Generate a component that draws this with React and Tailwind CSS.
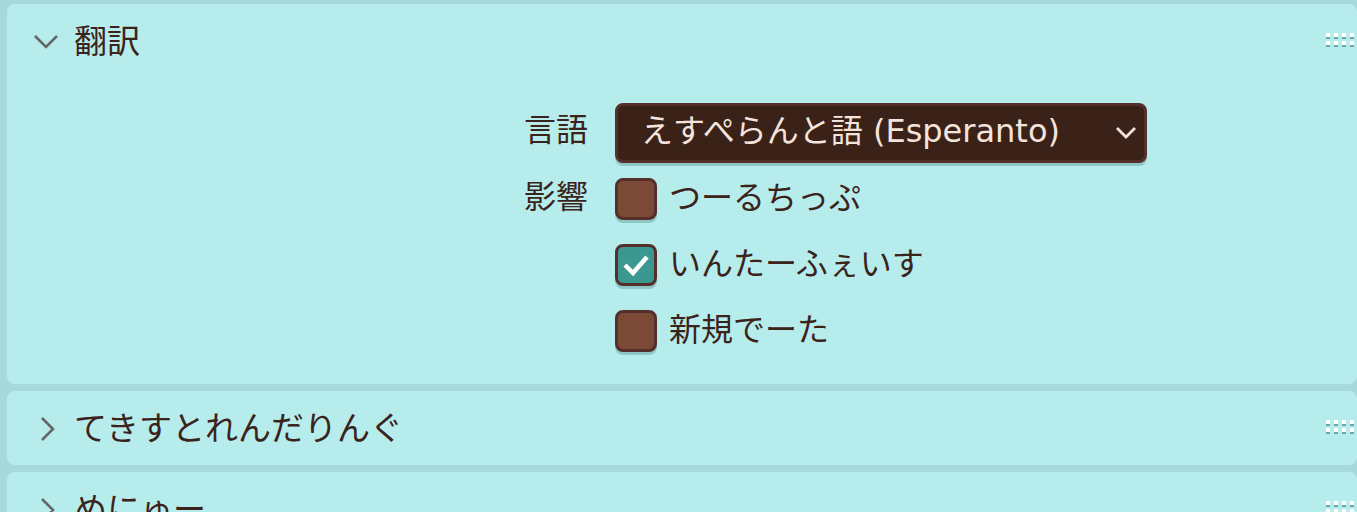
import React, { useState } from 'react';

const FONT = { fontFamily: '"DejaVu Sans", "Noto Sans CJK JP", sans-serif' };

function DragHandle() {
    const dots = [0, 1, 2, 3];
    return (
        <div className="flex flex-col gap-[2px]">
            {[0, 1].map((r) => (
                <div key={r} className="flex gap-[4px]">
                    {dots.map((d) => (
                        <span key={d} className="w-[4px] h-[4px] bg-white border-b-2 border-[#6aa6a6] box-content" />
                    ))}
                </div>
            ))}
        </div>
    );
}

function Chevron({ open }) {
    return open ? (
        <svg width="26" height="16" viewBox="0 0 26 16" fill="none">
            <path d="M2 2 L13 13 L24 2" stroke="#666" strokeWidth="2.6" />
        </svg>
    ) : (
        <svg width="16" height="26" viewBox="0 0 16 26" fill="none">
            <path d="M2 2 L13 13 L2 24" stroke="#666" strokeWidth="2.6" />
        </svg>
    );
}

function PanelHeader({ title, open }) {
    return (
        <div className="h-[76px] flex items-center pr-[3px] pb-[1px]">
            <div className={open ? 'w-[67px] pl-[26px] flex items-center' : 'w-[67px] pl-[33px] flex items-center'}>
                <Chevron open={open} />
            </div>
            <span className="flex-1 text-[33px] leading-[40px] text-[#3a231b]">{title}</span>
            <div className="mt-[-3px]">
                <DragHandle />
            </div>
        </div>
    );
}

function Checkbox({ checked, label, onToggle }) {
    return (
        <div className="flex items-center h-[66px]">
            <button
                onClick={onToggle}
                className={
                    checked
                        ? 'w-[42px] h-[42px] rounded-[8px] border-[3px] border-[#55302a] bg-[#3b9890] shadow-[0_3px_0_#8fc6c6] flex items-center justify-center'
                        : 'w-[42px] h-[42px] rounded-[8px] border-[3px] border-[#55302a] bg-[#7a4a37] shadow-[0_3px_0_#8fc6c6]'
                }
            >
                {checked && (
                    <svg width="28" height="24" viewBox="0 0 28 24" fill="none">
                        <path d="M3 12 L11 20 L25 4" stroke="#fff" strokeWidth="4.5" />
                    </svg>
                )}
            </button>
            <span className="ml-[12px] pb-[2px] text-[32px] leading-[40px] text-[#3a231b]">{label}</span>
        </div>
    );
}

export default function App() {
    const [checks, setChecks] = useState({ tooltip: false, iface: true, newdata: false });
    const toggle = (k) => setChecks({ ...checks, [k]: !checks[k] });

    return (
        <div className="w-[1357px] h-[512px] overflow-hidden bg-[#a6d9db] pl-[7px] pt-[4px] flex flex-col gap-[7px]" style={FONT}>
            <div className="bg-[#b7ecec] rounded-[8px] h-[380px] shrink-0">
                <PanelHeader title="翻訳" open />
                <div className="flex pt-[23px]">
                    <div className="w-[581px] shrink-0 flex flex-col items-end">
                        <div className="h-[60px] pb-[6px] flex items-center text-[32px] leading-[40px] text-[#3a231b]">言語</div>
                        <div className="mt-[4px] h-[66px] pb-[6px] flex items-center text-[32px] leading-[40px] text-[#3a231b]">影響</div>
                    </div>
                    <div className="ml-[27px] flex flex-col">
                        <div className="w-[532px] h-[60px] rounded-[8px] border-[3px] border-[#55302a] bg-[#3a2219] shadow-[0_3px_0_#8fc6c6] flex items-center pl-[23px] pr-[6px]">
                            <span className="flex-1 pb-[4px] text-[32px] leading-[40px] text-[#f4e4dc]">えすぺらんと語 (Esperanto)</span>
                            <svg width="24" height="16" viewBox="0 0 24 16" fill="none">
                                <path d="M3 3 L12 12 L21 3" stroke="#f4e4dc" strokeWidth="2.8" />
                            </svg>
                        </div>
                        <div className="mt-[3px]">
                            <Checkbox checked={checks.tooltip} label="つーるちっぷ" onToggle={() => toggle('tooltip')} />
                            <Checkbox checked={checks.iface} label="いんたーふぇいす" onToggle={() => toggle('iface')} />
                            <Checkbox checked={checks.newdata} label="新規でーた" onToggle={() => toggle('newdata')} />
                        </div>
                    </div>
                </div>
            </div>
            <div className="bg-[#b7ecec] rounded-[8px] h-[74px] shrink-0">
                <PanelHeader title="てきすとれんだりんぐ" />
            </div>
            <div className="bg-[#b7ecec] rounded-[8px] h-[74px] shrink-0">
                <PanelHeader title="めにゅー" />
            </div>
        </div>
    );
}
